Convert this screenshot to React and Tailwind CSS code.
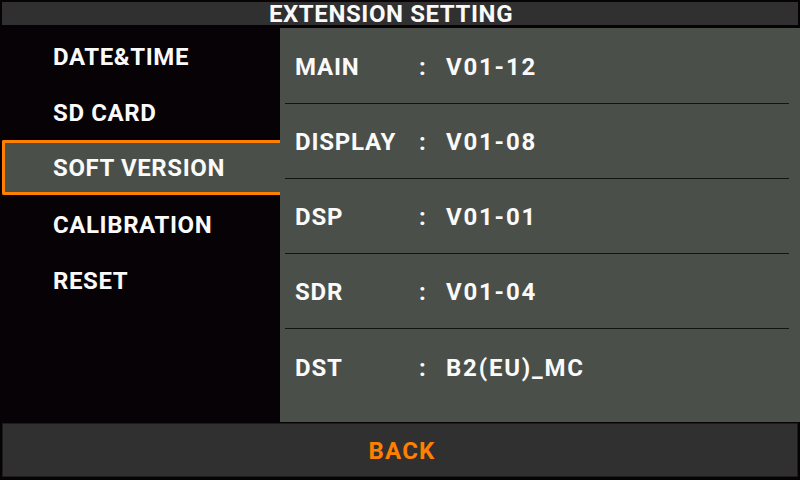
export default function App() {
  const menu = ["DATE&TIME", "SD CARD", "SOFT VERSION", "CALIBRATION", "RESET"];
  const rows = [
    ["MAIN", "V01-12"],
    ["DISPLAY", "V01-08"],
    ["DSP", "V01-01"],
    ["SDR", "V01-04"],
    ["DST", "B2(EU)_MC"],
  ];
  const font = { fontFamily: 'Roboto, "Liberation Sans", sans-serif' };
  return (
    <div
      className="w-[800px] h-[480px] bg-[#060206] flex flex-col overflow-hidden text-[#fafafa] font-bold"
      style={font}
    >
      <div className="mx-[2px] mt-[2px] h-[23px] bg-[#303030] flex items-end justify-center pr-[18px] text-[24px] leading-[22px] tracking-[0.6px]">
        EXTENSION SETTING
      </div>
      <div className="mt-[3px] h-[394px] flex">
        <div className="w-[280px] flex flex-col">
          {menu.map((m, i) =>
            i === 2 ? (
              <div
                key={m}
                className="h-[55px] mb-[1px] ml-[2px] border-[3px] border-r-0 border-[#ff8000] rounded-l-[2px] bg-[#4a4f4a] flex items-center pl-[48px] pt-[1px] text-[24px] leading-none tracking-[0.6px]"
              >
                {m}
              </div>
            ) : (
              <div
                key={m}
                className="h-[56px] flex items-center pl-[53px] pt-[1px] text-[24px] leading-none tracking-[0.6px]"
              >
                {m}
              </div>
            )
          )}
        </div>
        <div className="flex-1 bg-[#4a4f4a] pt-[1px] flex flex-col">
          {rows.map(([k, v], i) => (
            <div
              key={k}
              className={
                "h-[75px] ml-[5px] mr-[11px] flex items-center pl-[10px] pt-[2px] text-[24px] leading-none " +
                (i < 4 ? "border-b border-[#141414]" : "")
              }
            >
              <span className="w-[120px] tracking-[0.8px]">{k}</span>
              <span className="w-[31px] pl-[4px]">:</span>
              <span className="tracking-[1.8px]">{v}</span>
            </div>
          ))}
        </div>
      </div>
      <div className="mt-[1px] mx-[2px] h-[54px] bg-[#303030] border border-[#1c1c1c] flex items-center justify-center text-[#ff8000] text-[24px] leading-none pl-[4px] pt-[1px] tracking-[1.2px]">
        BACK
      </div>
    </div>
  );
}
